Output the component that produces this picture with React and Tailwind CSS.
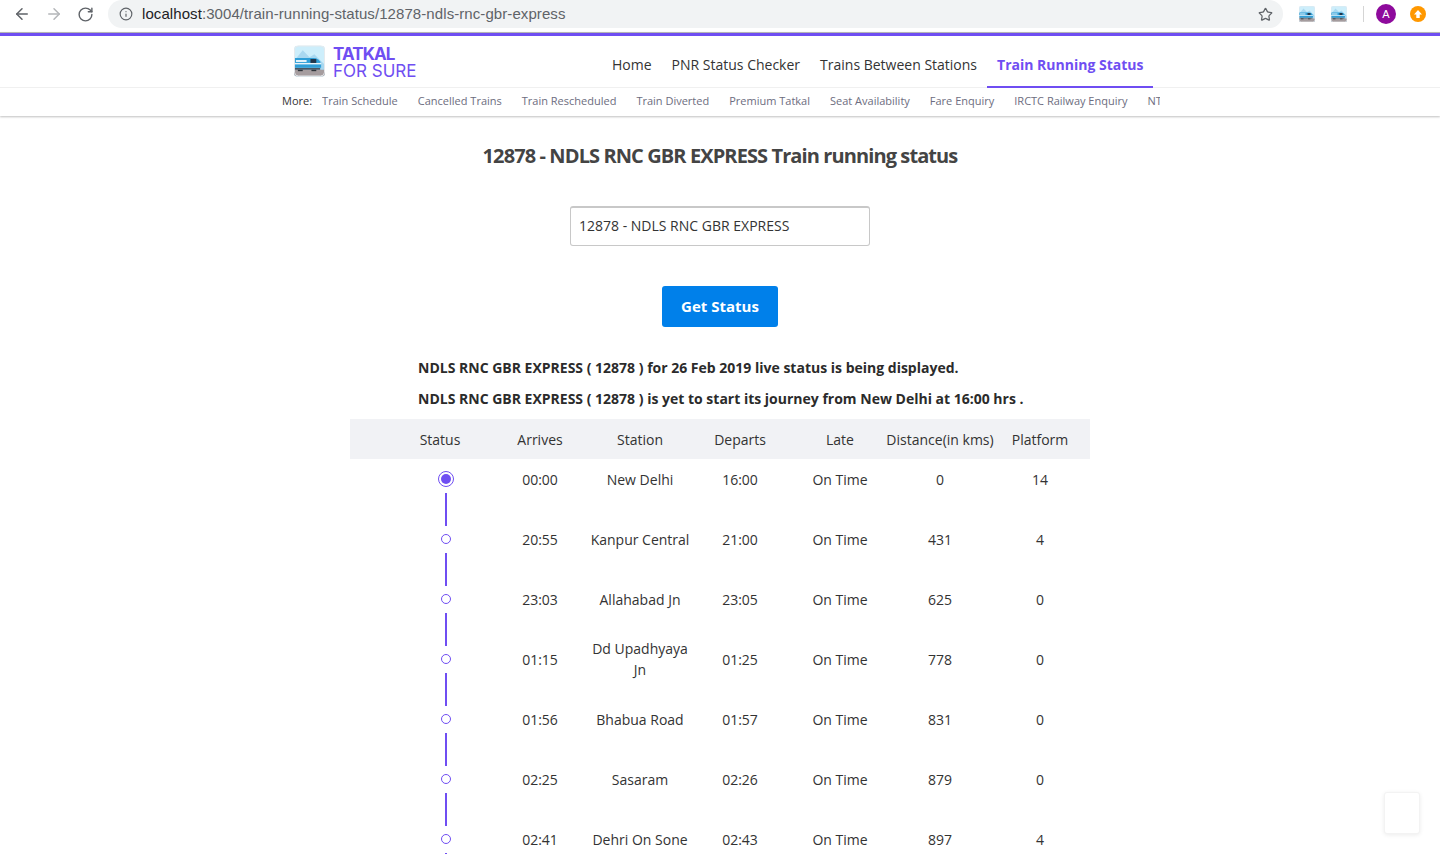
import { ArrowLeft, ArrowRight, RotateCw, Info, Star } from "lucide-react";

const moreLinks = [
  "Train Schedule",
  "Cancelled Trains",
  "Train Rescheduled",
  "Train Diverted",
  "Premium Tatkal",
  "Seat Availability",
  "Fare Enquiry",
  "IRCTC Railway Enquiry",
  "NTES",
];

const stops = [
  ["00:00", "New Delhi", "16:00", "0", "14"],
  ["20:55", "Kanpur Central", "21:00", "431", "4"],
  ["23:03", "Allahabad Jn", "23:05", "625", "0"],
  ["01:15", "Dd Upadhyaya Jn", "01:25", "778", "0"],
  ["01:56", "Bhabua Road", "01:57", "831", "0"],
  ["02:25", "Sasaram", "02:26", "879", "0"],
  ["02:41", "Dehri On Sone", "02:43", "897", "4"],
];

function TrainLogo({ className }) {
  return (
    <svg viewBox="0 0 32 32" className={className}>
      <defs>
        <clipPath id="logo-clip">
          <rect width="32" height="32" rx="4" />
        </clipPath>
      </defs>
      <g clipPath="url(#logo-clip)">
        <rect width="32" height="32" fill="#cdeefb" />
        <path d="M0 16 L9 5 L16 12 L21 9 L32 20 V32 H0Z" fill="#a9d8f0" />
        <rect y="25" width="32" height="7" fill="#a59c9e" />
        <rect y="23" width="27" height="2" fill="#4a5560" />
        <path d="M0 13 H20 Q26 13 28 19 V23 H0Z" fill="#2f9fd8" />
        <rect y="18" width="28" height="1.5" fill="#e8f5fb" />
        <rect x="2" y="15" width="11" height="2" fill="#e8f5fb" />
        <rect x="17" y="14" width="6" height="4" fill="#22364a" />
        <rect x="4" y="25" width="5" height="1.5" fill="#30343a" />
        <rect x="18" y="25" width="5" height="1.5" fill="#30343a" />
      </g>
      <rect x="0.5" y="0.5" width="31" height="31" rx="4" fill="none" stroke="#e6e9ec" />
    </svg>
  );
}

function BrowserBar() {
  return (
    <div className="h-[32px] pb-[4px] bg-white flex items-center font-['Liberation_Sans',sans-serif]">
      <div className="flex items-center gap-[14px] pl-[13px] text-[#5f6368]">
        <ArrowLeft size={18} />
        <ArrowRight size={18} className="text-[#b4b6b9]" />
        <RotateCw size={17} />
      </div>
      <div className="ml-[14px] w-[1175px] h-[28px] rounded-full bg-[#f1f3f4] flex items-center pl-[11px] pr-[10px]">
        <Info size={14} className="text-[#5f6368]" />
        <span className="ml-[9px] text-[15px] tracking-[0.08px] text-[#5f6368]">
          <span className="text-[#202124]">localhost</span>:3004/train-running-status/12878-ndls-rnc-gbr-express
        </span>
        <Star size={15} className="ml-auto text-[#5f6368]" />
      </div>
      <div className="flex items-center ml-[16px]">
        <TrainLogo className="w-[16px] h-[16px]" />
        <TrainLogo className="w-[16px] h-[16px] ml-[16px]" />
        <div className="w-px h-[16px] bg-[#d5d5d5] ml-[16px]" />
        <div className="w-[20px] h-[20px] ml-[12px] rounded-full bg-[#8e0a9c] text-white text-[11px] flex items-center justify-center">A</div>
        <div className="w-[16px] h-[16px] ml-[14px] rounded-full bg-[#ff9800] flex items-center justify-center">
          <svg viewBox="0 0 10 10" className="w-[10px] h-[10px]">
            <path d="M5 1 L9 5.5 H6.7 V9 H3.3 V5.5 H1Z" fill="#fff" />
          </svg>
        </div>
      </div>
    </div>
  );
}

function Header() {
  return (
    <div className="border-t border-[#b5b5b5] shadow-[0_1px_2px_rgba(0,0,0,0.25)]">
      <div className="h-[3px] bg-[#6f4ef2]" />
      <div className="h-[52px] border-b border-[#f0f0f0] flex items-center pl-[294px]">
        <TrainLogo className="w-[31px] h-[32px] mt-[-1px]" />
        <div className="ml-[8px] w-[84px] text-[#6f4ef2] text-[17px] leading-[17px] font-['Inter',sans-serif] mt-[3px]">
          <div className="font-bold tracking-[-0.9px]">TATKAL</div>
          <div>FOR SURE</div>
        </div>
        <nav className="flex ml-[185px] h-full text-[14px] text-[#333]">
          <a className="px-[10px] pt-[18px]">Home</a>
          <a className="px-[10px] pt-[18px]">PNR Status Checker</a>
          <a className="px-[10px] pt-[18px]">Trains Between Stations</a>
          <a className="px-[10px] pt-[18px] h-[52px] border-b-2 border-[#6f4ef2] text-[#6f4ef2] font-bold">Train Running Status</a>
        </nav>
      </div>
      <div className="h-[28px] pb-[2px] flex items-center pl-[282px] text-[11px]">
        <span className="text-[#333] shrink-0">More:</span>
        <div className="ml-[10px] w-[838px] overflow-hidden flex gap-[20px] text-[#6d6d80] whitespace-nowrap">
          {moreLinks.map((l) => (
            <a key={l}>{l}</a>
          ))}
        </div>
      </div>
    </div>
  );
}

function StatusDot({ first, last }) {
  return (
    <div className="relative h-[40px] w-[16px] ml-[48px] flex items-center justify-center">
      {first ? (
        <div className="w-[16px] h-[16px] rounded-full border border-[#6f4ef2] flex items-center justify-center">
          <div className="w-[10px] h-[10px] rounded-full bg-[#6f4ef2]" />
        </div>
      ) : (
        <div className="w-[10px] h-[10px] rounded-full border border-[#6f4ef2]" />
      )}
      {!last && <div className="absolute left-[7px] top-[34px] w-[2px] h-[33px] bg-[#6f4ef2]" />}
    </div>
  );
}

function Cell({ children }) {
  return <div className="h-[40px] flex items-center justify-center leading-[21px]">{children}</div>;
}

function StatusTable() {
  return (
    <div className="w-[740px] mx-auto mt-[10px] text-[14px] text-[#333]">
      <div className="h-[40px] bg-[#f1f2f5] pl-[40px] grid grid-cols-[repeat(7,100px)] items-center text-center">
        <Cell>Status</Cell>
        <Cell>Arrives</Cell>
        <Cell>Station</Cell>
        <Cell>Departs</Cell>
        <Cell>Late</Cell>
        <div className="h-[40px] flex items-center justify-center leading-[21px] whitespace-nowrap">Distance(in kms)</div>
        <Cell>Platform</Cell>
      </div>
      {stops.map(([arr, station, dep, dist, plat], i) => (
        <div key={station} className="h-[60px] pl-[40px] grid grid-cols-[repeat(7,100px)] items-start text-center">
          <StatusDot first={i === 0} />
          <Cell>{arr}</Cell>
          <Cell>{station}</Cell>
          <Cell>{dep}</Cell>
          <Cell>On Time</Cell>
          <Cell>{dist}</Cell>
          <Cell>{plat}</Cell>
        </div>
      ))}
    </div>
  );
}

export default function App() {
  return (
    <div className="relative h-[854px] overflow-hidden bg-white font-['Open_Sans',sans-serif]">
      <BrowserBar />
      <Header />
      <h1 className="mt-[26px] text-center text-[20px] leading-[27px] font-bold tracking-[-0.9px] text-[#444]">
        12878 - NDLS RNC GBR EXPRESS Train running status
      </h1>
      <input
        readOnly
        value="12878 - NDLS RNC GBR EXPRESS"
        className="block mx-auto mt-[37px] w-[300px] h-[40px] pl-[8px] pb-[2px] text-[14px] text-[#333] bg-white rounded-[3px] border border-[#c8c8c8] border-t-2 font-['Open_Sans',sans-serif] outline-none"
      />
      <button className="block mx-auto mt-[40px] w-[116px] h-[41px] rounded-[3px] bg-[#0080ea] text-white text-[15px] font-bold">
        Get Status
      </button>
      <div className="w-[606px] ml-[418px] mt-[30px] text-[14px] font-bold text-[#2b2b2b] whitespace-nowrap">
        <p className="leading-[21px]">NDLS RNC GBR EXPRESS ( 12878 ) for 26 Feb 2019 live status is being displayed.</p>
        <p className="leading-[21px] mt-[10px]">NDLS RNC GBR EXPRESS ( 12878 ) is yet to start its journey from New Delhi at 16:00 hrs .</p>
      </div>
      <StatusTable />
      <div className="absolute left-[1384px] top-[792px] w-[36px] h-[42px] bg-white rounded-[3px] border border-[#f3f3f3] shadow-[0_1px_4px_rgba(0,0,0,0.08)]" />
    </div>
  );
}
